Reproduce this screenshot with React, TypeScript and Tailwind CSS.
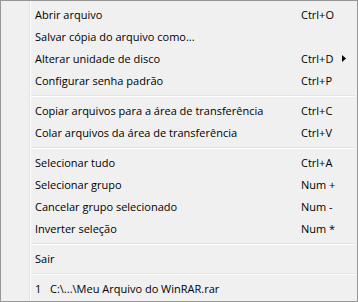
import React from 'react';

type Entry =
  | { kind: 'item'; label: string; shortcut?: string; submenu?: boolean }
  | { kind: 'sep' };

const ENTRIES: Entry[] = [
  { kind: 'item', label: 'Abrir arquivo', shortcut: 'Ctrl+O' },
  { kind: 'item', label: 'Salvar cópia do arquivo como...' },
  { kind: 'item', label: 'Alterar unidade de disco', shortcut: 'Ctrl+D', submenu: true },
  { kind: 'item', label: 'Configurar senha padrão', shortcut: 'Ctrl+P' },
  { kind: 'sep' },
  { kind: 'item', label: 'Copiar arquivos para a área de transferência', shortcut: 'Ctrl+C' },
  { kind: 'item', label: 'Colar arquivos da área de transferência', shortcut: 'Ctrl+V' },
  { kind: 'sep' },
  { kind: 'item', label: 'Selecionar tudo', shortcut: 'Ctrl+A' },
  { kind: 'item', label: 'Selecionar grupo', shortcut: 'Num +' },
  { kind: 'item', label: 'Cancelar grupo selecionado', shortcut: 'Num -' },
  { kind: 'item', label: 'Inverter seleção', shortcut: 'Num *' },
  { kind: 'sep' },
  { kind: 'item', label: 'Sair' },
  { kind: 'sep' },
];

const Row = ({ label, shortcut, submenu }: { label: React.ReactNode; shortcut?: string; submenu?: boolean }) => (
  <div className="h-[22px] flex items-center text-black">
    <div className="w-[270px] pl-[4px] whitespace-nowrap">{label}</div>
    <div className="w-[41px] whitespace-nowrap">{shortcut}</div>
    {submenu && (
      <svg width="4" height="7" viewBox="0 0 4 7" className="mt-[1px]">
        <path d="M0 0 L4 3.5 L0 7 Z" fill="#000" />
      </svg>
    )}
  </div>
);

const Separator = () => (
  <div className="h-[8px] pt-[4px]">
    <div className="h-px bg-[#e2e3e3]" />
    <div className="h-px bg-white" />
  </div>
);

export default function App() {
  return (
    <div
      className="w-[358px] h-[302px] bg-[#f0f0f0] border border-[#979797] flex text-[11px] leading-none"
      style={{ fontFamily: '"Segoe UI", "Open Sans", sans-serif' }}
    >
      <div className="w-[28px] shrink-0" />
      <div className="w-px bg-[#e2e3e3] shrink-0" />
      <div className="w-px bg-white shrink-0" />
      <div className="w-[324px] py-[2px]">
        {ENTRIES.map((e, i) =>
          e.kind === 'sep' ? <Separator key={i} /> : <Row key={i} label={e.label} shortcut={e.shortcut} submenu={e.submenu} />
        )}
        <Row
          label={
            <span className="flex">
              <span className="w-[15px]">1</span>
              <span>C:\...\Meu Arquivo do WinRAR.rar</span>
            </span>
          }
        />
      </div>
    </div>
  );
}
